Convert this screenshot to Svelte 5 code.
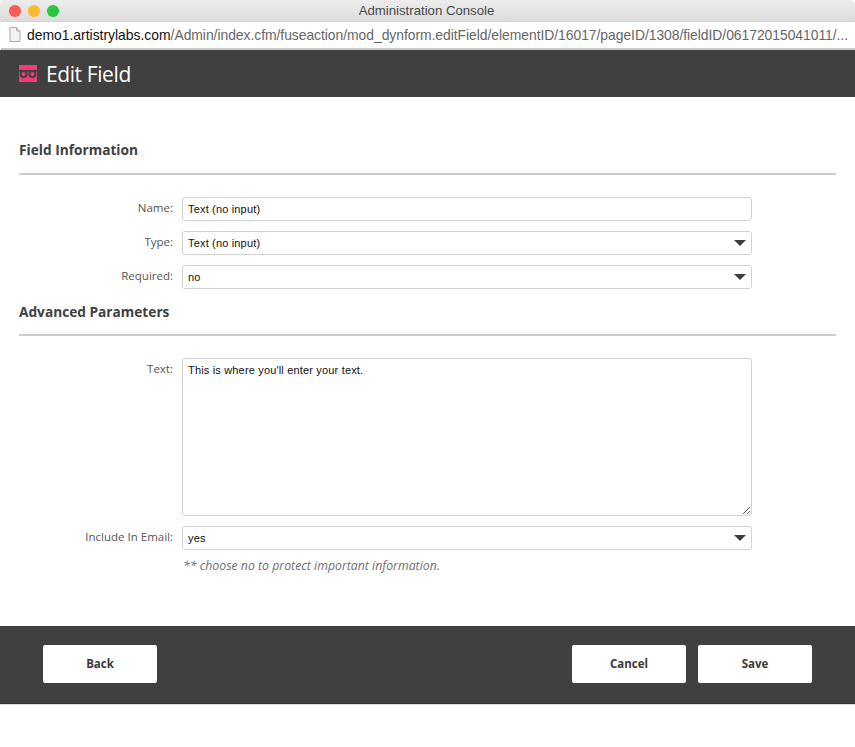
<script lang="ts">
  const url = {
    host: "demo1.artistrylabs.com",
    path: "/Admin/index.cfm/fuseaction/mod_dynform.editField/elementID/16017/pageID/1308/fieldID/06172015041011/...",
  };
</script>

<div class="window">
  <div class="titlebar">
    <div class="lights">
      <span class="light red"></span>
      <span class="light yellow"></span>
      <span class="light green"></span>
    </div>
    <span class="window-title">Administration Console</span>
  </div>

  <div class="urlbar">
    <svg class="page-icon" width="12" height="15" viewBox="0 0 12 15" fill="none">
      <path d="M1 .5h6.5L11 4v10.5H1z" fill="#f4f4f4" stroke="#a9a9a9" />
      <path d="M7.5.5V4H11" fill="#dcdcdc" stroke="#a9a9a9" />
    </svg>
    <span class="url"><span class="host">{url.host}</span><span class="path">{url.path}</span></span>
  </div>

  <header class="page-header">
    <svg class="logo" width="18" height="18" viewBox="0 0 18 18">
      <rect width="18" height="17" fill="#f03c78" />
      <rect y="5" width="18" height="1.6" fill="#404040" />
      <circle cx="4.6" cy="9" r="3" fill="#f03c78" stroke="#404040" stroke-width="2" />
      <circle cx="13.4" cy="9" r="3" fill="#f03c78" stroke="#404040" stroke-width="2" />
    </svg>
    <h1>Edit Field</h1>
  </header>

  <main class="content">
    <section class="first">
      <h2>Field Information</h2>
      <div class="fields">
        <div class="row">
          <label for="name">Name:</label>
          <input id="name" type="text" value="Text (no input)" />
        </div>
        <div class="row">
          <label for="type">Type:</label>
          <select id="type"><option>Text (no input)</option></select>
        </div>
        <div class="row">
          <label for="required">Required:</label>
          <select id="required"><option>no</option></select>
        </div>
      </div>
    </section>

    <section class="second">
      <h2>Advanced Parameters</h2>
      <div class="fields">
        <div class="row">
          <label for="text">Text:</label>
          <textarea id="text">This is where you'll enter your text.</textarea>
        </div>
        <div class="row">
          <label for="email">Include In Email:</label>
          <select id="email"><option>yes</option></select>
        </div>
        <p class="hint">** choose no to protect important information.</p>
      </div>
    </section>
  </main>

  <footer class="actions">
    <button type="button">Back</button>
    <div class="actions-right">
      <button type="button">Cancel</button>
      <button type="button">Save</button>
    </div>
  </footer>
</div>

<style>
  :global(body) {
    margin: 0;
    background: #fff;
  }

  .window {
    width: 855px;
    height: 747px;
    overflow: hidden;
    display: flex;
    flex-direction: column;
    font-family: "Open Sans", sans-serif;
    color: #444;
  }

  .titlebar {
    height: 21px;
    flex-shrink: 0;
    display: flex;
    align-items: center;
    justify-content: center;
    position: relative;
    background: linear-gradient(#ececec, #dcdcdc);
    border-top-left-radius: 5px;
    border-top-right-radius: 5px;
  }

  .lights {
    position: absolute;
    left: 9px;
    top: 5px;
    display: flex;
    gap: 7.5px;
  }

  .light {
    width: 11.5px;
    height: 11.5px;
    border-radius: 50%;
  }

  .red {
    background: #fc5b57;
  }

  .yellow {
    background: #fdb82e;
  }

  .green {
    background: #27c73f;
  }

  .window-title {
    font-family: "Liberation Sans", sans-serif;
    font-size: 13.2px;
    color: #4a4a4a;
    margin-right: 2px;
  }

  .urlbar {
    height: 29px;
    flex-shrink: 0;
    box-sizing: border-box;
    display: flex;
    align-items: center;
    gap: 6px;
    padding: 0 0 1px 8px;
    margin: 0 0 0 1px;
    background: #fff;
    border-top: 1px solid #d4d4d4;
    border-bottom: 2px solid #c9c9c9;
  }

  .page-icon {
    flex-shrink: 0;
  }

  .url {
    font-family: "Liberation Sans", sans-serif;
    font-size: 13.9px;
    color: #666;
    white-space: nowrap;
  }

  .host {
    color: #111;
  }

  .path {
    letter-spacing: -0.04px;
  }

  .page-header {
    height: 47px;
    flex-shrink: 0;
    display: flex;
    align-items: center;
    gap: 9px;
    padding-left: 19px;
    box-sizing: border-box;
    background: #404040;
  }

  .logo {
    flex-shrink: 0;
  }

  h1 {
    margin: 0;
    font-size: 21px;
    font-weight: 400;
    letter-spacing: -0.4px;
    color: #fff;
  }

  .content {
    flex: 1;
    padding: 0 19px;
  }

  section.first {
    padding-top: 42px;
  }

  section.second {
    padding-top: 12px;
  }

  h2 {
    margin: 0;
    box-sizing: border-box;
    font-size: 13.7px;
    line-height: 20px;
    font-weight: 700;
    color: #3f3f3f;
    border-bottom: 2px solid #ccc;
    height: 35.5px;
    padding-top: 1px;
  }

  .fields {
    padding-top: 22px;
    display: flex;
    flex-direction: column;
    gap: 10px;
  }

  .row {
    display: flex;
    gap: 9px;
    align-items: flex-start;
  }

  label {
    width: 154px;
    flex-shrink: 0;
    text-align: right;
    font-size: 11.5px;
    line-height: 21px;
    color: #555;
  }

  input,
  select,
  textarea {
    width: 570px;
    height: 24px;
    box-sizing: border-box;
    margin: 0;
    padding: 0 5px;
    font-family: "Liberation Sans", sans-serif;
    font-size: 11px;
    letter-spacing: 0.17px;
    color: #111;
    background-color: #fff;
    border: 1px solid #d2d2d2;
    border-radius: 3px;
    outline: none;
  }

  select {
    appearance: none;
  }

  .row:has(select) {
    position: relative;
  }

  .row:has(select)::after {
    content: "";
    position: absolute;
    left: 715px;
    top: 9px;
    width: 0;
    height: 0;
    border-left: 6px solid transparent;
    border-right: 6px solid transparent;
    border-top: 6px solid #3d3d3d;
  }

  textarea {
    height: 158px;
    padding: 5px;
    line-height: 13px;
    display: block;
  }

  .hint {
    margin: -3px 0 0 164px;
    font-size: 12.3px;
    font-style: italic;
    font-weight: 400;
    color: #6f6f6f;
  }

  .actions {
    height: 78px;
    flex-shrink: 0;
    box-sizing: border-box;
    margin-bottom: 43px;
    padding: 0 43px 2px;
    display: flex;
    align-items: center;
    justify-content: space-between;
    background: #404040;
    border-bottom: 1px solid #333;
    box-shadow: 0 1px 0 #ddd;
  }

  .actions-right {
    display: flex;
    gap: 12px;
  }

  button {
    width: 114px;
    height: 38px;
    border: none;
    border-radius: 2px;
    background: #fff;
    font-family: "Open Sans", sans-serif;
    font-size: 11.5px;
    font-weight: 700;
    color: #3a3a3a;
  }
</style>
